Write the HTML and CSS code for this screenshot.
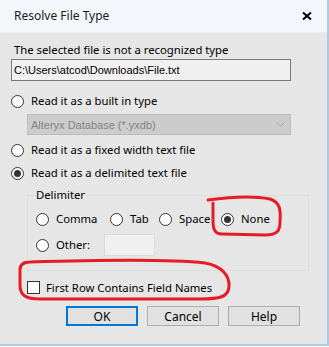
FILE: index.html
```html
<!DOCTYPE html>
<html lang="en">
<head>
  <meta charset="UTF-8" />
  <title>Resolve File Type</title>
  <link rel="stylesheet" href="styles.css">
</head>
<body>
  <div class="dialog">
    <div class="titlebar">
      <span class="title">Resolve File Type</span>
      <svg class="close" width="10" height="8" viewBox="0 0 10 8"><path d="M1 0.5 L9 7.5 M9 0.5 L1 7.5" stroke="#000" stroke-width="2"/></svg>
    </div>

    <div class="content">
      <p class="msg">The selected file is not a recognized type</p>
      <div class="path-box">C:\Users\atcod\Downloads\File.txt</div>

      <label class="radio opt-first"><span class="dot"></span>Read it as a built in type</label>
      <div class="select">
        <span>Alteryx Database (*.yxdb)</span>
        <svg width="9" height="5" viewBox="0 0 9 5"><path d="M0.5 0.5 L4.5 4.5 L8.5 0.5" fill="none" stroke="#a8a8a8"/></svg>
      </div>
      <label class="radio opt"><span class="dot"></span>Read it as a fixed width text file</label>
      <label class="radio opt"><span class="dot on"></span>Read it as a delimited text file</label>

      <fieldset class="delim">
        <legend>Delimiter</legend>
        <div class="delim-row">
          <label class="radio w-comma"><span class="dot"></span>Comma</label>
          <label class="radio w-tab"><span class="dot"></span>Tab</label>
          <label class="radio w-space"><span class="dot"></span>Space</label>
          <label class="radio"><span class="dot on"></span>None</label>
        </div>
        <div class="delim-row second">
          <label class="radio w-other"><span class="dot"></span>Other:</label>
          <div class="other-box"></div>
        </div>
      </fieldset>

      <label class="check"><span class="box"></span>First Row Contains Field Names</label>

      <div class="buttons">
        <button class="btn default">OK</button>
        <button class="btn">Cancel</button>
        <button class="btn">Help</button>
      </div>
    </div>

    <!-- red marker scribbles drawn over the screenshot -->
    <svg class="marks" width="329" height="347" viewBox="0 0 329 347">
      <path d="M208,200 C230,197 255,196 270,199 C280,202 281,210 280,222 C280,230 278,235 265,235 L222,234 C214,234 213,228 213,220 L213,203" />
      <path d="M30,262 C100,260 170,259 205,263 C222,266 230,276 229,287 C228,297 220,299 200,299 L40,299 C25,299 20,295 20,285 L20,270 C20,264 24,262 30,262" />
    </svg>
  </div>
</body>
</html>
```

FILE: styles.css
```css
*, *::before, *::after {
  box-sizing: border-box;
}
html, body {
  margin: 0;
  padding: 0;
  background: #ffffff;
}
body {
  font-family: 'Noto Sans', 'Open Sans', sans-serif;
  font-size: 11.3px;
  color: #000;
}

/* Window frame */
.dialog {
  position: relative;
  width: 329px;
  height: 346px;
  background: #e6e6e6;
  border-right: 2px solid #aecbe6;
  border-bottom: 2px solid #aecbe6;
  overflow: hidden;
}

.titlebar {
  height: 33px;
  background: #f3f6fb;
  border-bottom: 1px solid #e9ecf1;
  display: flex;
  align-items: center;
  justify-content: space-between;
  padding: 0 15px 1px 14px;
}
.title {
  font-size: 12px;
  color: #1a1a1a;
}
.close {
  display: block;
}

.content {
  padding: 9px 0 0 11px;
}

.msg {
  margin: 0 0 0 3px;
  line-height: 16px;
}

.path-box {
  margin-top: 1px;
  width: 280px;
  height: 22px;
  border: 1px solid #7a7a7a;
  background: #f0f0f0;
  font-family: 'Liberation Sans', Arial, sans-serif;
  font-size: 11px;
  line-height: 20px;
  padding-left: 2px;
}

/* Radio buttons */
.radio {
  display: flex;
  align-items: center;
  height: 16px;
  line-height: 16px;
  white-space: nowrap;
}
.dot {
  width: 13px;
  height: 13px;
  border: 1px solid #333;
  border-radius: 50%;
  background: #fff;
  margin-right: 7px;
  flex: none;
  display: flex;
  align-items: center;
  justify-content: center;
}
.dot.on::after {
  content: '';
  width: 7px;
  height: 7px;
  border-radius: 50%;
  background: #333;
}
.opt-first {
  margin-top: 12px;
}
.opt {
  margin-top: 7px;
}

.select {
  margin: 5px 0 0 16px;
  width: 264px;
  height: 21px;
  background: #cccccc;
  border: 1px solid #bcbcbc;
  display: flex;
  align-items: center;
  justify-content: space-between;
  padding: 0 5px 0 3px;
  font-family: 'Liberation Sans', Arial, sans-serif;
  font-size: 11px;
  color: #838383;
}

/* Delimiter group */
.delim {
  margin: 6px 0 0 16px;
  width: 282px;
  border: 1px solid #dcdcdc;
  padding: 0 0 14px 8px;
}
.delim legend {
  padding: 0 2px 0 0;
  line-height: 16px;
}
.delim-row {
  display: flex;
  align-items: center;
  margin-top: 8px;
}
.delim-row.second {
  margin-top: 7px;
}
.w-comma { width: 74px; }
.w-tab { width: 49px; }
.w-space { width: 62px; }
.w-other { width: 68px; }
.other-box {
  width: 51px;
  height: 22px;
  background: #f0f0f0;
  border: 1px solid #dadada;
}

/* Checkbox */
.check {
  display: flex;
  align-items: center;
  margin: 9px 0 0 16px;
  height: 14px;
}
.box {
  width: 13px;
  height: 13px;
  border: 1px solid #333;
  background: #fff;
  margin-right: 6px;
}

/* Buttons */
.buttons {
  display: flex;
  gap: 9px;
  margin: 12px 0 0 55px;
}
.btn {
  width: 72px;
  height: 20px;
  background: #e1e1e1;
  border: 1px solid #adadad;
  font-family: inherit;
  font-size: 12px;
  color: #000;
  padding: 0;
}
.btn.default {
  border: 2px solid #0078d7;
}

.marks {
  position: absolute;
  top: 0;
  left: 0;
  pointer-events: none;
}
.marks path {
  fill: none;
  stroke: #e61c24;
  stroke-width: 3;
  stroke-linecap: round;
  stroke-linejoin: round;
}
```
